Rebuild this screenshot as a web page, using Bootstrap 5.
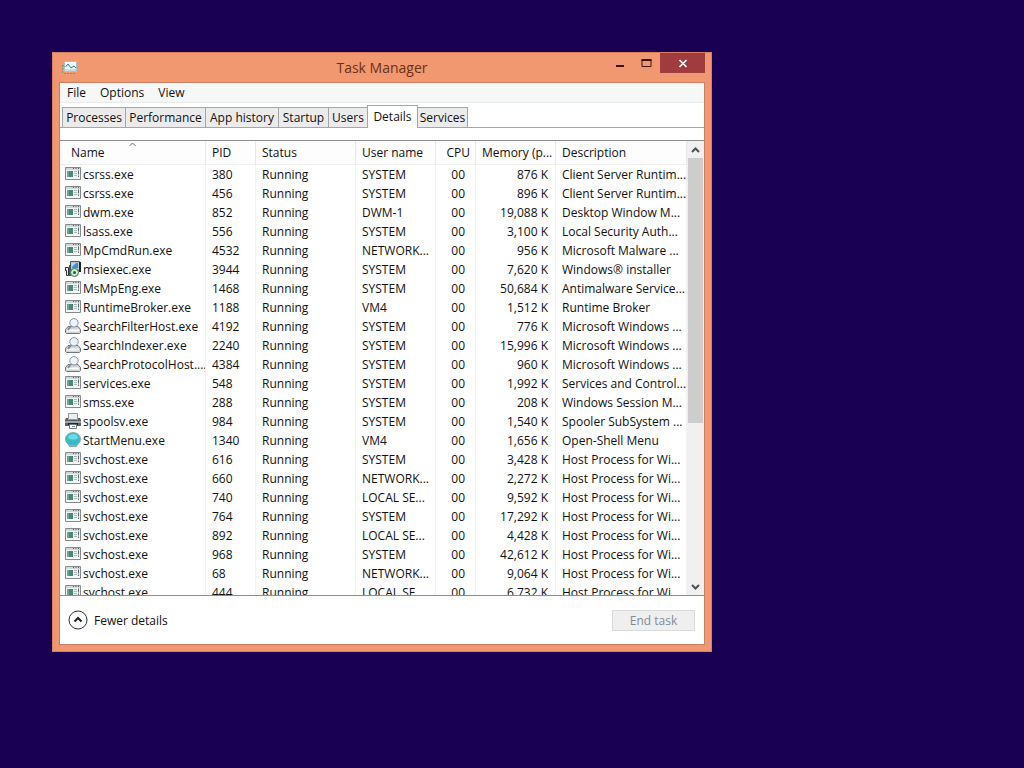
<!DOCTYPE html>
<html lang="en">
<head>
<meta charset="utf-8">
<meta name="viewport" content="width=device-width, initial-scale=1">
<title>Task Manager</title>
<link href="https://cdn.jsdelivr.net/npm/bootstrap@5.3.0/dist/css/bootstrap.min.css" rel="stylesheet">
<style>
  body { background: #1a0052; font-family: "Open Sans", "Noto Sans", sans-serif; font-size: 12px; line-height: 19px; color: #111; }
  button { font: inherit; color: inherit; }
  .desktop { padding: 52px; min-height: 100vh; }
  .win { max-width: 660px; background: #f29871; border: 1px solid #d97f5e; padding: 0 6px 6px; }
  .titlebar { height: 29px; }
  .titlebar h1 { font-size: 14px; line-height: 30px; color: #6b3015; }
  .app-icon { left: 2px; top: 7px; }
  .controls { right: 0; top: 0; }
  .controls button { background: none; border: 0; padding: 0; height: 20px; width: 27px; }
  .controls button.shut { background: #a03c3e; width: 45px; }
  .client { background: #fff; border: 1px solid #cb8063; }
  .menus { height: 20px; background: #f6f7f7; border-bottom: 1px solid #e9ebeb; padding-left: 7px; gap: 14px; }
  .menus button { background: none; border: 0; padding: 0; }
  .tabs { height: 25px; padding: 2px 2px 0; border-bottom: 1px solid #a6a6a6; }
  .tabs button { height: 20px; padding: 0; background: #ebebeb; border: 1px solid #a6a6a6; border-bottom: 0; margin-right: -1px; line-height: 19px; }
  .tabs button.active { height: 23px; background: #fff; margin-bottom: -1px; line-height: 18px; }
  .w1 { width: 40px; } .w2 { width: 51px; } .w3 { width: 64px; } .w4 { width: 74px; } .w5 { width: 81px; }
  .listing { margin-top: 12px; height: calc(100vh - 312px); min-height: 120px; border-top: 1px solid #8f8f8f; border-bottom: 1px solid #8f8f8f; overflow: hidden; }
  .procs { table-layout: fixed; width: 100%; border-collapse: separate; border-spacing: 0; }
  .procs th, .procs td { padding: 0 0 0 6px; height: 19px; font-weight: 400; white-space: nowrap; overflow: hidden; border-right: 1px solid #f3f3f3; line-height: 19px; }
  .procs th { height: 24px; border-bottom: 1px solid #efefef; border-right-color: #e8e8e8; background: #fdfdfd; position: relative; }
  .procs th:first-child { padding-left: 11px; }
  .procs td:first-child { padding-left: 5px; }
  .procs td svg { display: inline-block; vertical-align: top; margin: 1px 2px 0 0; }
  .procs .cpu { text-align: right; padding-right: 10px; }
  .procs th.cpu { padding-right: 5px; }
  .procs td.mem { text-align: right; padding-right: 7px; }
  .sort { left: 69px; top: 1px; }
  .sbar { width: 17px; background: #f0f0f0; }
  .sbar button { border: 0; padding: 0; height: 17px; background: #f0f0f0; line-height: 0; }
  .sbar .thumb { height: 63%; margin: 0 1px; background: #cdcdcd; }
  .sbar .track { min-height: 0; }
  .foot { height: 48px; padding: 0 9px 0 8px; }
  .foot .fewer { background: none; border: 0; padding: 0; gap: 6px; }
  .foot .end { width: 83px; height: 21px; padding: 0; line-height: 19px; background: #efefef; border: 1px solid #d9d9d9; color: #838b92; }
</style>
</head>
<body>
<svg width="0" height="0" class="position-absolute" aria-hidden="true">
  <symbol id="i-app" viewBox="0 0 16 16">
    <path d="M.500 1.500h15v12H.500z" fill="#eef3f2" stroke="#858b8b"/><path d="M1 3h14" stroke="#d3d9db" stroke-width="2"/>
    <path d="M8 2.500h1M10.500 2.500h1M13 2.500h1" stroke="#555f61"/>
    <path d="M2 5h6v6H2z" fill="#4b8879"/><path d="M2 5h2v6H2z" fill="#6da495"/><path d="M9 5.500h3M9 7.500h3M9 9.500h3" stroke="#b2babb"/><path d="M13.500 4.500v4M13.500 9.500v1.500" stroke="#5b6a70"/>
    <path d="M1 12h14" stroke="#fff"/>
  </symbol>
  <symbol id="i-search" viewBox="0 0 16 16">
    <path d="M.500 11.500 3 8.500h10l2.500 3v3l-1 1h-13l-1-1z" fill="#d1d5d8" stroke="#70767b"/>
    <path d="M2 12.500h12" stroke="#fafafa" stroke-width="2"/><path d="M6 8 3 12" stroke="#858c92" stroke-width="2"/><circle cx="9" cy="4.800" r="4.200" fill="#eaf3fb" stroke="#8b9299"/><path d="M6.500 4.500a2.500 2.500 0 0 1 2.500-2" stroke="#fff" fill="none"/>
  </symbol>
  <symbol id="i-print" viewBox="0 0 16 16">
    <path d="M3.500.500h9v6h-9z" fill="#eceff1" stroke="#92979a"/><path d="M1 5h2v2h10V5h2l1 2v6H0V7z" fill="#5d6266"/><path d="M0 8h16v2H0z" fill="#a0a5a8"/><path d="M3 10h10v2H3z" fill="#222426"/><path d="M4.500 11.500h7v4h-7z" fill="#fff" stroke="#777"/><path d="M7 13.500h3" stroke="#4e91b0"/>
  </symbol>
  <symbol id="i-shell" viewBox="0 0 16 16">
    <path d="M8 .500c4 0 7.500 3 7.500 6.500 0 2-1 4-3 5.500l-1 2h-7l-1-2C1.500 11 .500 9 .500 7 .500 3.500 4 .500 8 .500z" fill="#37bccb" stroke="#91aa9c"/>
    <path d="M3 6c0-2 2-4 5-4s5 2 5 4c-3 2-7 2-10 0z" fill="#68dce4"/><path d="M4.500 13.500h7" stroke="#a9b48d"/>
  </symbol>
  <symbol id="i-msi" viewBox="0 0 16 16">
    <path d="M5.500.500h9v9h-9z" fill="#bfc5c9" stroke="#50575b"/><path d="M7 2h6v5H7z" fill="#3a8fdd"/><path d="M7 2h4L7 6z" fill="#a8d8fa"/><path d="M14 1h2v10h-2z" fill="#202427"/>
    <path d="M.500 6.500h3v8h-2v-5h-1z" fill="#e8e8e8" stroke="#333"/><path d="M4 4h2v11H4z" fill="#4b5357"/><circle cx="9.500" cy="11.500" r="4" fill="#cdebd4" stroke="#2d7f4e"/><circle cx="9.500" cy="11.500" r="1.500" fill="#24613c"/>
  </symbol>
</svg>

<main class="desktop">
  <section class="win" aria-label="Task Manager">
    <header class="titlebar position-relative text-center">
      <svg class="app-icon position-absolute" width="18" height="16" viewBox="0 0 18 16" aria-hidden="true">
        <path d="M3.500 1.500h12v10h-12z" fill="#effafa" stroke="#a9c2c2"/><path d="M4 9h11v2H4z" fill="#b9e5e8"/><path d="M4.500 7 7 4l3 4 3-2 2 2" fill="none" stroke="#357d86"/>
        <path d="M1.500 5v9M3 13.500h11M1 5.500h2" stroke="#7d9586" stroke-dasharray="2 1"/>
      </svg>
      <h1 class="m-0 fw-normal">Task Manager</h1>
      <div class="controls position-absolute d-flex">
        <button type="button" aria-label="Minimize"><svg class="d-block mx-auto" width="10" height="20"><path d="M1 13h8" stroke="#3c1408" stroke-width="2"/></svg></button>
        <button type="button" aria-label="Maximize"><svg class="d-block mx-auto" width="11" height="20"><path d="M1 6.500v7h9v-7z" fill="none" stroke="#3c1408"/><path d="M.500 7h10" stroke="#3c1408" stroke-width="2"/></svg></button>
        <button type="button" class="shut" aria-label="Close"><svg class="d-block mx-auto" width="10" height="20"><path d="m1.500 7 7 7m0-7-7 7" stroke="#fff" stroke-width="1.700"/></svg></button>
      </div>
    </header>
    <div class="client">
      <nav class="menus d-flex align-items-center" aria-label="Menu">
        <button type="button">File</button><button type="button">Options</button><button type="button">View</button>
      </nav>
      <div class="tabs d-flex align-items-end" role="tablist">
        <button type="button" role="tab" class="w3">Processes</button>
        <button type="button" role="tab" class="w5">Performance</button>
        <button type="button" role="tab" class="w4">App history</button>
        <button type="button" role="tab" class="w2">Startup</button>
        <button type="button" role="tab" class="w1">Users</button>
        <button type="button" role="tab" class="w2 active" aria-selected="true">Details</button>
        <button type="button" role="tab" class="w2">Services</button>
      </div>
      <div class="listing d-flex">
        <div class="flex-grow-1 overflow-hidden">
          <table class="procs">
            <colgroup><col style="width:146px"><col style="width:50px"><col style="width:100px"><col style="width:80px"><col style="width:40px"><col style="width:80px"><col></colgroup>
            <thead><tr>
              <th scope="col">Name<svg class="sort position-absolute" width="7" height="5" aria-hidden="true"><path d="m.500 4 3-3 3 3" fill="none" stroke="#666"/></svg></th>
              <th scope="col">PID</th><th scope="col">Status</th><th scope="col">User name</th><th scope="col" class="cpu">CPU</th><th scope="col">Memory (p...</th><th scope="col">Description</th>
            </tr></thead>
            <tbody id="rows"></tbody>
          </table>
        </div>
        <div class="sbar d-flex flex-column flex-shrink-0">
          <button type="button" aria-label="Scroll up"><svg width="9" height="6"><path d="m1 5 3.500-3.500L8 5" fill="none" stroke="#505050" stroke-width="2"/></svg></button>
          <div class="track flex-grow-1"><div class="thumb"></div></div>
          <button type="button" aria-label="Scroll down"><svg width="9" height="6"><path d="m1 1 3.500 3.500L8 1" fill="none" stroke="#505050" stroke-width="2"/></svg></button>
        </div>
      </div>
      <footer class="foot d-flex align-items-center justify-content-between">
        <button type="button" class="fewer d-flex align-items-center"><svg width="20" height="20" aria-hidden="true"><circle cx="10" cy="10" r="9" fill="#fff" stroke="#333"/><path d="m6.500 11.500 3.500-3.500 3.500 3.500" fill="none" stroke="#222" stroke-width="2"/></svg>Fewer details</button>
        <button type="button" class="end" disabled>End task</button>
      </footer>
    </div>
  </section>
</main>

<script>
  // icon | name | PID | user | memory | description
  const data = `app|csrss.exe|380|SYSTEM|876|Client Server Runtim...
app|csrss.exe|456|SYSTEM|896|Client Server Runtim...
app|dwm.exe|852|DWM-1|19,088|Desktop Window M...
app|lsass.exe|556|SYSTEM|3,100|Local Security Auth...
app|MpCmdRun.exe|4532|NETWORK...|956|Microsoft Malware ...
msi|msiexec.exe|3944|SYSTEM|7,620|Windows® installer
app|MsMpEng.exe|1468|SYSTEM|50,684|Antimalware Service...
app|RuntimeBroker.exe|1188|VM4|1,512|Runtime Broker
search|SearchFilterHost.exe|4192|SYSTEM|776|Microsoft Windows ...
search|SearchIndexer.exe|2240|SYSTEM|15,996|Microsoft Windows ...
search|SearchProtocolHost....|4384|SYSTEM|960|Microsoft Windows ...
app|services.exe|548|SYSTEM|1,992|Services and Control...
app|smss.exe|288|SYSTEM|208|Windows Session M...
print|spoolsv.exe|984|SYSTEM|1,540|Spooler SubSystem ...
shell|StartMenu.exe|1340|VM4|1,656|Open-Shell Menu
app|svchost.exe|616|SYSTEM|3,428|Host Process for Wi...
app|svchost.exe|660|NETWORK...|2,272|Host Process for Wi...
app|svchost.exe|740|LOCAL SE...|9,592|Host Process for Wi...
app|svchost.exe|764|SYSTEM|17,292|Host Process for Wi...
app|svchost.exe|892|LOCAL SE...|4,428|Host Process for Wi...
app|svchost.exe|968|SYSTEM|42,612|Host Process for Wi...
app|svchost.exe|68|NETWORK...|9,064|Host Process for Wi...
app|svchost.exe|444|LOCAL SE...|6,732|Host Process for Wi...`;
  document.getElementById('rows').innerHTML = data.split('\n').map(line => {
    const [icon, name, pid, user, mem, desc] = line.split('|');
    return `<tr><td><svg width="16" height="16" aria-hidden="true"><use href="#i-${icon}"/></svg>${name}</td><td>${pid}</td><td>Running</td><td>${user}</td><td class="cpu">00</td><td class="mem">${mem} K</td><td>${desc}</td></tr>`;
  }).join('');
</script>
<script src="https://cdn.jsdelivr.net/npm/bootstrap@5.3.0/dist/js/bootstrap.bundle.min.js"></script>
</body>
</html>
